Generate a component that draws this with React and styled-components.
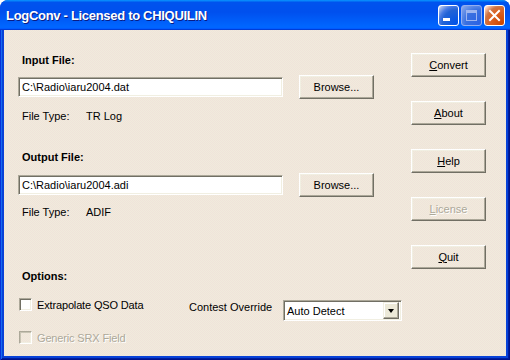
import React from 'react';
import styled, { createGlobalStyle, css } from 'styled-components';

const Global = createGlobalStyle`
  html, body { margin: 0; padding: 0; background: #fff; }
  body { width: 510px; height: 360px; overflow: hidden; font-family: "Liberation Sans", Arial, sans-serif; }
  * { box-sizing: border-box; }
`;

const Window = styled.div`
  width: 510px;
  height: 360px;
  display: flex;
  flex-direction: column;
  border-radius: 8px 8px 0 0;
  overflow: hidden;
  background: #0842d8;
`;

const TitleBar = styled.div`
  height: 30px;
  flex: none;
  display: flex;
  align-items: center;
  padding: 0 5px 0 6px;
  background: linear-gradient(180deg, #0997ff, #0053ee 8%, #0050ee 40%, #06f 88%, #06f 93%, #005bff 95%, #003dd7 96%, #003dd7);
`;

const Title = styled.div`
  flex: 1;
  color: #fff;
  font: bold 13px "Liberation Sans", Arial, sans-serif;
  letter-spacing: -0.3px;
  text-shadow: 1px 1px 0 #0a1c84;
  padding-top: 1px;
`;

const Controls = styled.div`
  display: flex;
  gap: 2px;
  padding-top: 1px;
`;

const CtlBtn = styled.div`
  width: 21px;
  height: 21px;
  border: 1px solid #fff;
  border-radius: 3px;
  display: flex;
  align-items: center;
  justify-content: center;
  background: radial-gradient(circle at 90% 90%, #0054e9 0, #2263d5 55%, #4479e4 70%, #a3bbec 90%, #fff 100%);
  ${p => p.$close && css`
    background: radial-gradient(circle at 90% 90%, #cc4600 0, #dc6527 55%, #cd7546 70%, #ffccb2 90%, #fff 100%);
  `}
  ${p => p.$disabled && css`
    border-color: #93aef0;
    background: radial-gradient(circle at 90% 90%, #2c63e4 0, #3a70e0 55%, #5585e6 70%, #7c9ee8 90%, #9ab4ee 100%);
  `}
`;

const Frame = styled.div`
  flex: 1;
  display: flex;
  padding: 0 4px 4px 4px;
  background: #0842d8;
  box-shadow: inset 1px 0 #0831d9, inset -1px -1px #00138c, inset 2px 0 #166aee, inset -2px -2px #001ea0;
`;

const Client = styled.div`
  flex: 1;
  display: grid;
  grid-template-columns: 1fr 75px;
  padding: 0 20px 0 14px;
  color: #000;
  font-size: 11px;
  background-color: #efe9db;
  background-image: repeating-conic-gradient(#f0ecdc 0 25%, #f0e2da 0 50%);
  background-size: 2px 2px;
`;

const LeftCol = styled.div`
  display: flex;
  flex-direction: column;
`;

const RightCol = styled.div`
  display: flex;
  flex-direction: column;
  gap: 24px;
  padding-top: 23px;
`;

const Heading = styled.div`
  margin: ${p => p.$top}px 0 0 4px;
  height: 14px;
  line-height: 14px;
  font-weight: bold;
  font-size: 11px;
`;

const FileRow = styled.div`
  display: flex;
  align-items: center;
  gap: 16px;
  height: 24px;
  margin-top: ${p => p.$top}px;
`;

const sunken = css`
  border: 1px solid;
  border-color: #aca899 #fff #fff #aca899;
  box-shadow: inset 1px 1px #716f64, inset -1px -1px #f1efe2;
  background: #fff;
`;

const TextInput = styled.div`
  ${sunken};
  width: 265px;
  height: 20px;
  padding: 0 3px;
  line-height: 18px;
  white-space: nowrap;
`;

const Button = styled.div`
  width: 75px;
  height: 24px;
  display: flex;
  align-items: center;
  justify-content: center;
  border: 1px solid;
  border-color: #fff #716f64 #716f64 #fff;
  box-shadow: inset -1px -1px #aca899, inset 1px 1px #f1efe2;
  color: ${p => (p.$disabled ? '#aca899' : '#000')};
  text-shadow: ${p => (p.$disabled ? '1px 1px 0 #fff' : 'none')};
  font-size: 11px;
  padding-bottom: 1px;
  u { text-decoration-thickness: 1px; text-underline-offset: 1px; }
`;

const InfoRow = styled.div`
  display: grid;
  grid-template-columns: 64px auto;
  margin: ${p => p.$top}px 0 0 4px;
  height: 14px;
  line-height: 14px;
`;

const OptionsRow = styled.div`
  display: flex;
  align-items: flex-start;
  margin-top: ${p => p.$top}px;
`;

const CheckItem = styled.div`
  display: flex;
  align-items: center;
  width: ${p => p.$width || 170}px;
  margin-left: 1px;
  height: 13px;
  letter-spacing: -0.15px;
  color: ${p => (p.$disabled ? '#aca899' : '#000')};
  text-shadow: ${p => (p.$disabled ? '1px 1px 0 #fff' : 'none')};
`;

const Box = styled.span`
  width: 13px;
  height: 13px;
  flex: none;
  margin-right: 5px;
  border: 1px solid;
  border-color: #aca899 #fff #fff #aca899;
  box-shadow: inset 1px 1px #716f64, inset -1px -1px #f1efe2;
  background: ${p => (p.$disabled ? 'transparent' : '#fff')};
  ${p => p.$disabled && css`box-shadow: inset 1px 1px #c8c4b4, inset -1px -1px #f1efe2;`}
`;

const FieldLabel = styled.div`
  width: 94px;
  margin-top: 2px;
  height: 14px;
  line-height: 14px;
`;

const Select = styled.div`
  ${sunken};
  width: 119px;
  height: 21px;
  margin-top: 2px;
  display: flex;
  align-items: center;
  padding: 2px 2px 2px 3px;
`;

const SelectText = styled.span`
  flex: 1;
  white-space: nowrap;
`;

const ArrowBtn = styled.span`
  width: 16px;
  height: 17px;
  display: flex;
  align-items: center;
  justify-content: center;
  background: #ece9d8;
  border: 1px solid;
  border-color: #f1efe2 #716f64 #716f64 #f1efe2;
  box-shadow: inset -1px -1px #aca899, inset 1px 1px #fff;
  &::after {
    content: '';
    border-left: 3.5px solid transparent;
    border-right: 3.5px solid transparent;
    border-top: 4px solid #000;
    margin-top: 1px;
  }
`;

export default function App() {
  return (
    <>
      <Global />
      <Window>
        <TitleBar>
          <Title>LogConv - Licensed to CHIQUILIN</Title>
          <Controls>
            <CtlBtn>
              <svg width="19" height="19" viewBox="0 0 19 19">
                <rect x="4" y="12" width="7" height="3" fill="#fff" />
              </svg>
            </CtlBtn>
            <CtlBtn $disabled>
              <svg width="19" height="19" viewBox="0 0 19 19">
                <rect x="4.5" y="4.5" width="10" height="10" fill="none" stroke="#9db5f0" strokeWidth="1" />
                <rect x="4" y="4" width="11" height="3" fill="#9db5f0" />
              </svg>
            </CtlBtn>
            <CtlBtn $close>
              <svg width="19" height="19" viewBox="0 0 19 19">
                <path d="M5 5 L14 14 M14 5 L5 14" stroke="#fff" strokeWidth="2" strokeLinecap="square" />
              </svg>
            </CtlBtn>
          </Controls>
        </TitleBar>
        <Frame>
          <Client>
            <LeftCol>
              <Heading $top={23}>Input File:</Heading>
              <FileRow $top={8}>
                <TextInput>C:\Radio\iaru2004.dat</TextInput>
                <Button>Browse...</Button>
              </FileRow>
              <InfoRow $top={10}>
                <span>File Type:</span>
                <span>TR Log</span>
              </InfoRow>
              <Heading $top={27}>Output File:</Heading>
              <FileRow $top={9}>
                <TextInput>C:\Radio\iaru2004.adi</TextInput>
                <Button>Browse...</Button>
              </FileRow>
              <InfoRow $top={8}>
                <span>File Type:</span>
                <span>ADIF</span>
              </InfoRow>
              <Heading $top={50}>Options:</Heading>
              <OptionsRow $top={15}>
                <CheckItem>
                  <Box />
                  Extrapolate QSO Data
                </CheckItem>
                <FieldLabel>Contest Override</FieldLabel>
                <Select>
                  <SelectText>Auto Detect</SelectText>
                  <ArrowBtn />
                </Select>
              </OptionsRow>
              <OptionsRow $top={10}>
                <CheckItem $disabled>
                  <Box $disabled />
                  Generic SRX Field
                </CheckItem>
              </OptionsRow>
            </LeftCol>
            <RightCol>
              <Button><span><u>C</u>onvert</span></Button>
              <Button><span><u>A</u>bout</span></Button>
              <Button><span><u>H</u>elp</span></Button>
              <Button $disabled><span><u>L</u>icense</span></Button>
              <Button><span><u>Q</u>uit</span></Button>
            </RightCol>
          </Client>
        </Frame>
      </Window>
    </>
  );
}
